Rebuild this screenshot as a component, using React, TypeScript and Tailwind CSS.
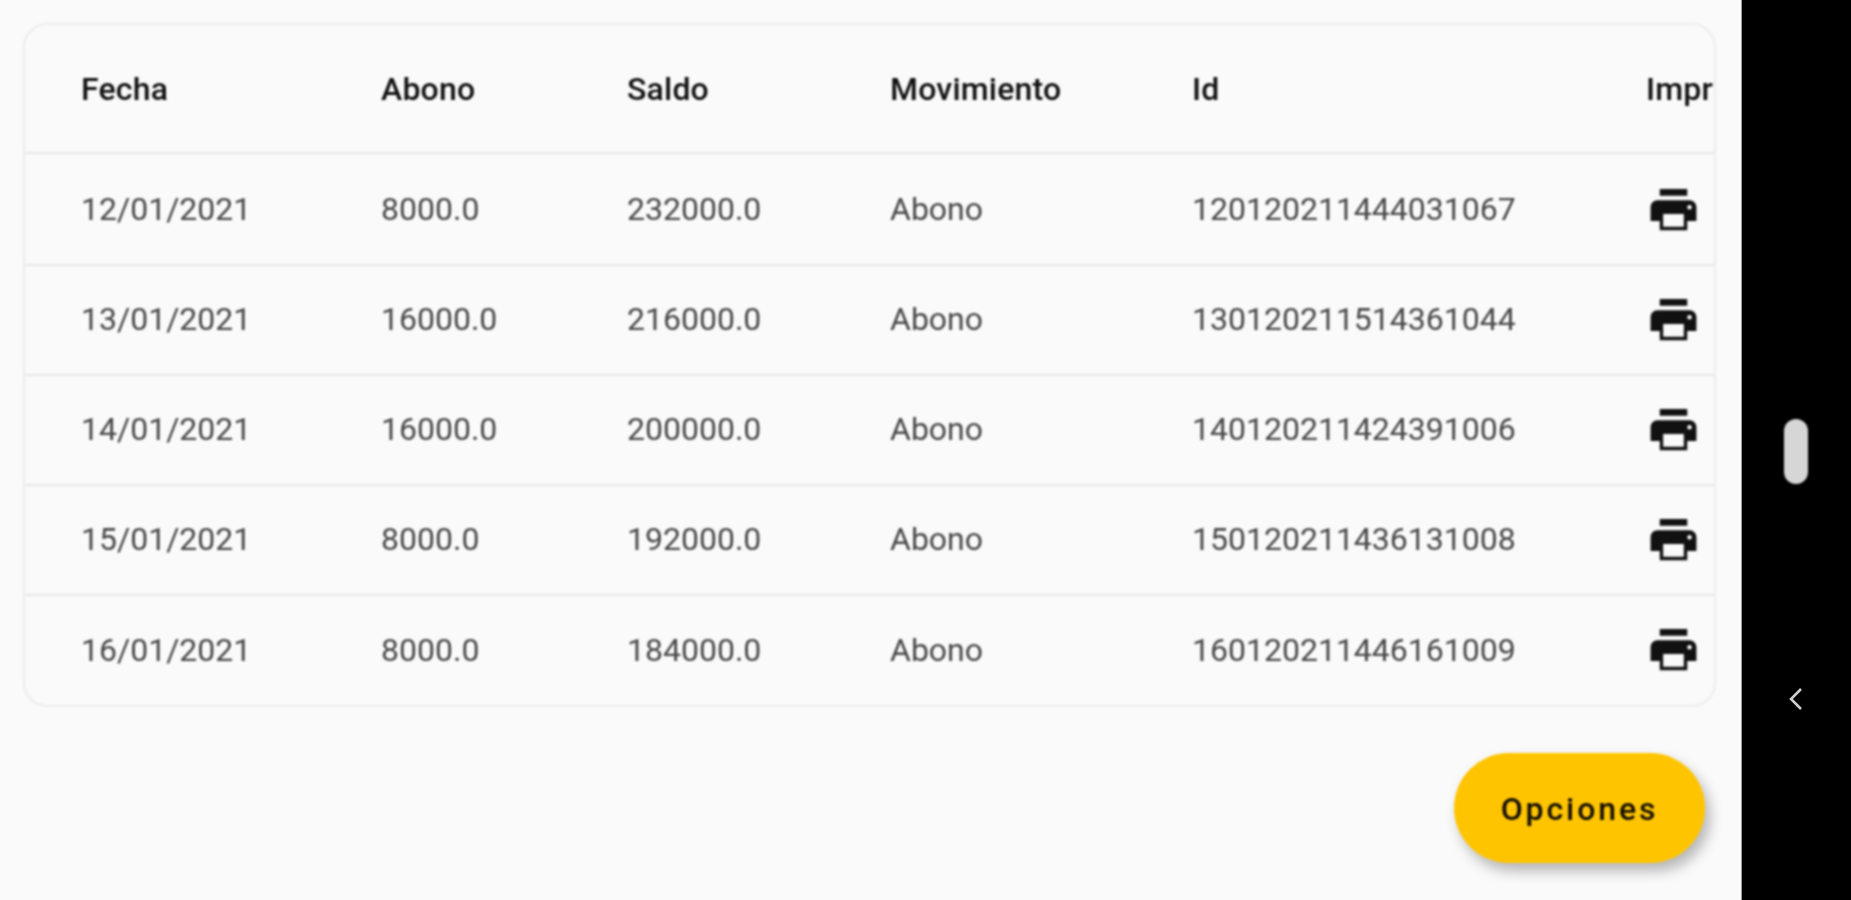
const rows = [
  { h: "h-[112px] border-b-2", c: ["12/01/2021", "8000.0", "232000.0", "Abono", "120120211444031067"] },
  { h: "h-[110px] border-b-2 pb-[2px]", c: ["13/01/2021", "16000.0", "216000.0", "Abono", "130120211514361044"] },
  { h: "h-[110px] border-b-2 pb-[2px]", c: ["14/01/2021", "16000.0", "200000.0", "Abono", "140120211424391006"] },
  { h: "h-[110px] border-b-2 pb-[2px]", c: ["15/01/2021", "8000.0", "192000.0", "Abono", "150120211436131008"] },
  { h: "h-[109px] pb-[2px]", c: ["16/01/2021", "8000.0", "184000.0", "Abono", "160120211446161009"] },
];

const headers = ["Fecha", "Abono", "Saldo", "Movimiento", "Id", "Impr"];
const cols = "grid grid-cols-[300px_246px_263px_302px_454px_200px] pl-[56px] items-center";

function PrintIcon() {
  return (
    <svg viewBox="0 0 24 24" className="w-[55px] h-[55px] fill-[#111111]">
      <path
        fillRule="evenodd"
        d="M19 8H5c-1.66 0-3 1.34-3 3v6h4v4h12v-4h4v-6c0-1.66-1.34-3-3-3zm-2.5 11.5h-9V14h9v5.5zM19 12c-.55 0-1-.45-1-1s.45-1 1-1 1 .45 1 1-.45 1-1 1zM18 3H6v3h12V3z"
      />
    </svg>
  );
}

export default function App() {
  return (
    <div className="flex w-[1851px] h-[900px] overflow-hidden bg-black font-['Roboto',sans-serif]">
      <main className="w-[1742px] h-full bg-[#fafafa] pt-[23px] pl-[23px] pr-[25px] border-r border-[#9a9a9a] flex flex-col">
        <div className="h-[684px] rounded-[24px] border-2 border-[#ececec] overflow-hidden blur-[0.9px]">
          <div className={`${cols} h-[129px] border-b-2 border-[#e6e6e6] text-[32px] font-medium tracking-[0.2px] text-[#111111] whitespace-nowrap`}>
            {headers.map((h) => (
              <div key={h}>{h}</div>
            ))}
          </div>
          {rows.map((r) => (
            <div
              key={r.c[0]}
              className={`${cols} ${r.h} border-[#e6e6e6] text-[32px] leading-none text-[#484848] whitespace-nowrap`}
            >
              {r.c.map((c, j) => (
                <div key={j}>{c}</div>
              ))}
              <div><PrintIcon /></div>
            </div>
          ))}
        </div>
        <div className="flex justify-end pr-[11px] mt-[46px]">
          <button className="w-[251px] h-[110px] pt-[2px] rounded-full bg-[#ffc400] text-[32px] font-medium tracking-[2.9px] text-[#120e00] shadow-[5px_8px_14px_rgba(0,0,0,0.28)] blur-[0.9px]">
            Opciones
          </button>
        </div>
      </main>
      <aside className="w-[109px] h-full bg-black flex flex-col items-center pr-[2px]">
        <div className="mt-[419px] w-[24px] h-[65px] rounded-full bg-[#d6d6d6] blur-[0.9px]" />
        <svg viewBox="0 0 16 24" className="mt-[203px] w-[16px] h-[24px] fill-none stroke-[#d0d0d0] stroke-[2.5] blur-[0.6px]">
          <path d="M13 2 L3 12 L13 22" />
        </svg>
      </aside>
    </div>
  );
}
